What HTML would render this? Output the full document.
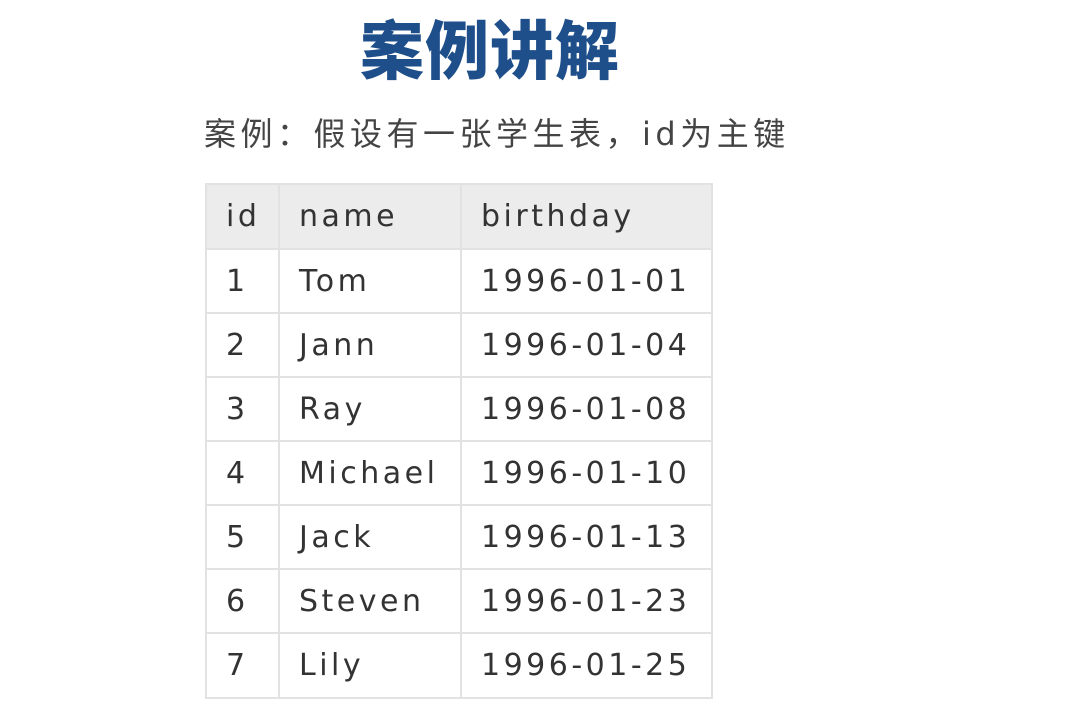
<!DOCTYPE html>
<html><head><meta charset="utf-8"><style>
body{margin:0;width:1067px;height:727px;background:#fff;position:relative;overflow:hidden;font-family:"Liberation Sans","Noto Sans CJK SC",sans-serif}
.t{position:absolute;left:360px;top:12px;font-size:64px;font-weight:900;color:#1f4f8a;letter-spacing:1px;line-height:80px}
.s{position:absolute;left:204px;top:113px;font-size:32px;color:#444;line-height:42px;letter-spacing:4.5px;white-space:nowrap;font-family:"DejaVu Sans","Noto Sans CJK SC",sans-serif}
table{position:absolute;left:205px;top:183px;border-collapse:collapse;font-size:30px;color:#333;letter-spacing:3.5px;font-family:"DejaVu Sans",sans-serif}
td{border:2px solid #e2e2e2;height:60px;padding:0 0 0 19px;box-sizing:border-box;white-space:nowrap}
tr:first-child td{background:#ececec}
</style></head><body>
<div class="t">案例讲解</div>
<div class="s">案例：假设有一张学生表，id为主键</div>
<table>
<colgroup><col style="width:73px"><col style="width:182px"><col style="width:251px"></colgroup>
<tr style="height:65px"><td>id</td><td>name</td><td>birthday</td></tr>
<tr style="height:64px"><td>1</td><td>Tom</td><td>1996-01-01</td></tr>
<tr style="height:64px"><td>2</td><td>Jann</td><td>1996-01-04</td></tr>
<tr style="height:64px"><td>3</td><td>Ray</td><td>1996-01-08</td></tr>
<tr style="height:64px"><td>4</td><td>Michael</td><td>1996-01-10</td></tr>
<tr style="height:64px"><td>5</td><td>Jack</td><td>1996-01-13</td></tr>
<tr style="height:64px"><td>6</td><td>Steven</td><td>1996-01-23</td></tr>
<tr style="height:65px"><td>7</td><td>Lily</td><td>1996-01-25</td></tr>
</table>
</body></html>
